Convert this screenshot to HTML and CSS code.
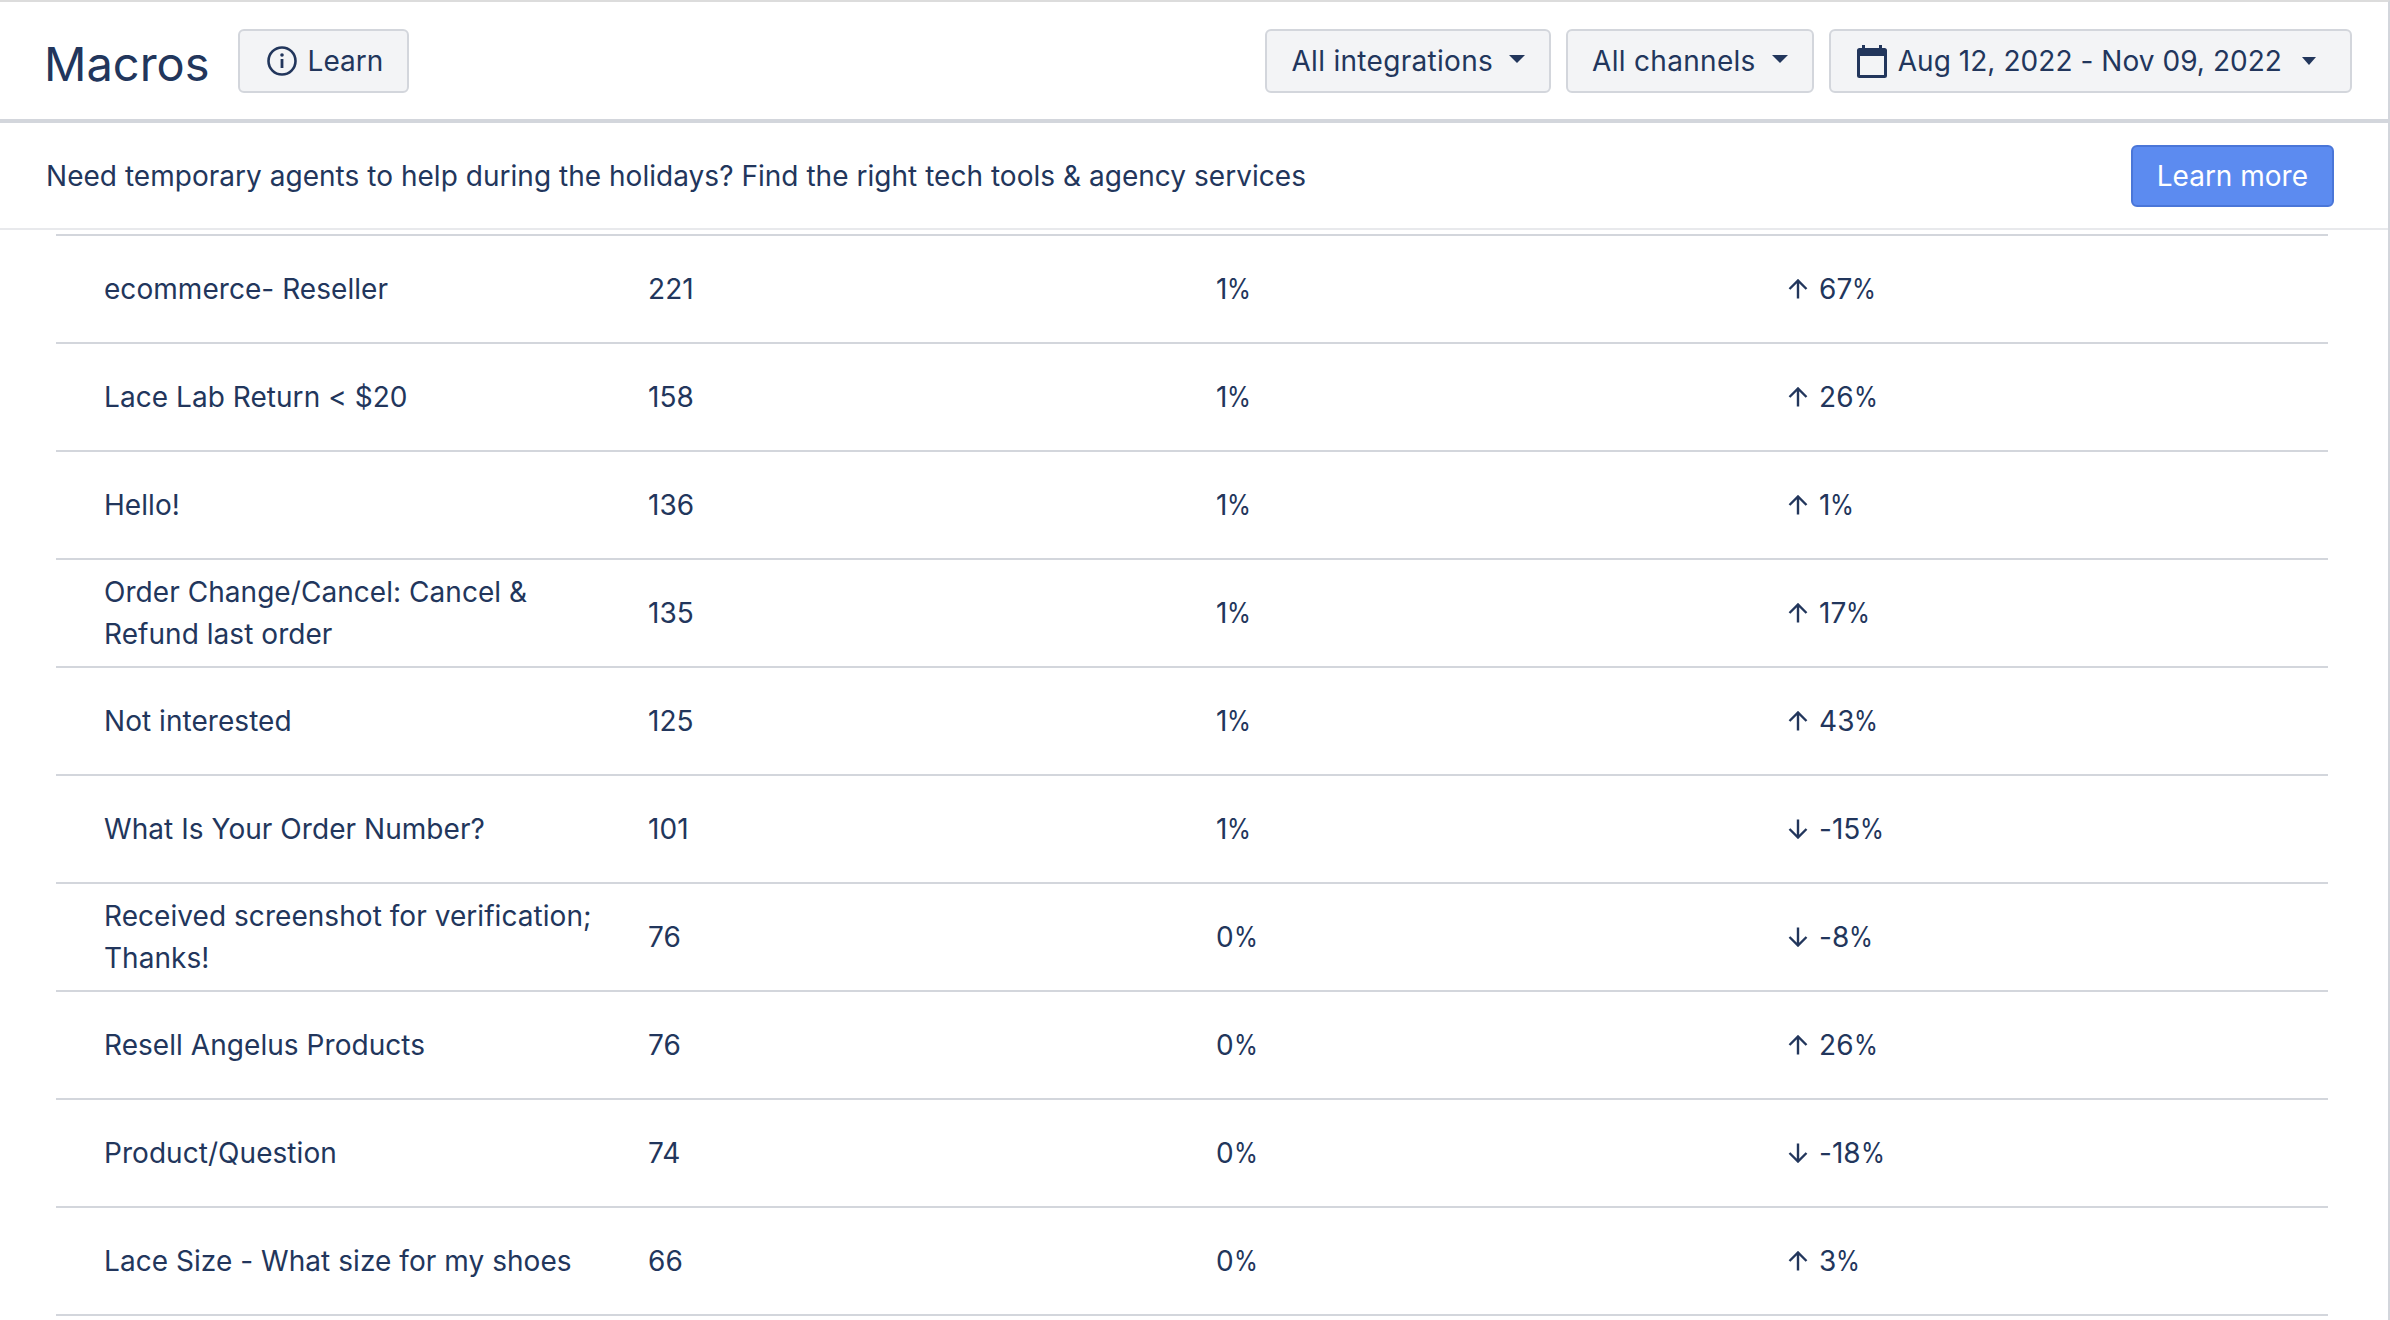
FILE: index.html
```html
<!DOCTYPE html>
<html lang="en">
<head>
<meta charset="utf-8">
<title>Macros</title>
<link rel="stylesheet" href="styles.css">
</head>
<body>
<svg class="sprite" aria-hidden="true">
  <symbol id="up" viewBox="0 0 20 20"><path d="M10 19.500V1.500M1.500 10 10 1.500l8.500 8.500" fill="none" stroke="currentColor" stroke-width="2.400"/></symbol>
  <symbol id="down" viewBox="0 0 20 20"><path d="M10 .5v18M1.500 10l8.500 8.500 8.500-8.500" fill="none" stroke="currentColor" stroke-width="2.400"/></symbol>
</svg>
<div class="page">
  <header class="topbar">
    <div class="title-group">
      <h1 class="title">Macros</h1>
      <button class="btn learn">
        <svg class="icon-info" viewBox="0 0 30 30" width="30" height="30"><circle cx="15" cy="15" r="13.500" fill="none" stroke="currentColor" stroke-width="2.600"/><rect x="13.600" y="13" width="2.800" height="9" fill="currentColor"/><circle cx="15" cy="9" r="1.800" fill="currentColor"/></svg>
        Learn
      </button>
    </div>
    <div class="filters">
      <button class="btn">All integrations<span class="caret"></span></button>
      <button class="btn">All channels<span class="caret"></span></button>
      <button class="btn date">
        <svg class="icon-cal" viewBox="0 0 30 33" width="30" height="33"><path d="M5 0h3v3h14V0h3v3h2.500A2.500 2.500 0 0 1 30 5.500v25a2.500 2.500 0 0 1-2.500 2.500h-25A2.500 2.500 0 0 1 0 30.500v-25A2.500 2.500 0 0 1 2.500 3H5zM3 11v19h24V11z" fill="currentColor"/></svg>
        Aug 12, 2022 - Nov 09, 2022<span class="caret small"></span>
      </button>
    </div>
  </header>
  <section class="banner">
    <p class="banner-text">Need temporary agents to help during the holidays? Find the right tech tools &amp; agency services</p>
    <button class="btn-primary">Learn more</button>
  </section>
  <main class="content">
    <table class="macros">
      <colgroup><col class="c1"><col class="c2"><col class="c3"><col></colgroup>
      <tbody>
        <tr><td>ecommerce- Reseller</td><td>221</td><td>1<span class="pct">%</span></td><td><span class="trend"><svg class="arrow"><use href="#up"/></svg><span>67<span class="pct">%</span></span></span></td></tr>
        <tr><td>Lace Lab Return &lt; $20</td><td>158</td><td>1<span class="pct">%</span></td><td><span class="trend"><svg class="arrow"><use href="#up"/></svg><span>26<span class="pct">%</span></span></span></td></tr>
        <tr><td>Hello!</td><td>136</td><td>1<span class="pct">%</span></td><td><span class="trend"><svg class="arrow"><use href="#up"/></svg><span>1<span class="pct">%</span></span></span></td></tr>
        <tr><td>Order Change/Cancel: Cancel &amp; Refund last order</td><td>135</td><td>1<span class="pct">%</span></td><td><span class="trend"><svg class="arrow"><use href="#up"/></svg><span>17<span class="pct">%</span></span></span></td></tr>
        <tr><td>Not interested</td><td>125</td><td>1<span class="pct">%</span></td><td><span class="trend"><svg class="arrow"><use href="#up"/></svg><span>43<span class="pct">%</span></span></span></td></tr>
        <tr><td>What Is Your Order Number?</td><td>101</td><td>1<span class="pct">%</span></td><td><span class="trend"><svg class="arrow"><use href="#down"/></svg><span>-15<span class="pct">%</span></span></span></td></tr>
        <tr><td>Received screenshot for verification; Thanks!</td><td>76</td><td>0<span class="pct">%</span></td><td><span class="trend"><svg class="arrow"><use href="#down"/></svg><span>-8<span class="pct">%</span></span></span></td></tr>
        <tr><td>Resell Angelus Products</td><td>76</td><td>0<span class="pct">%</span></td><td><span class="trend"><svg class="arrow"><use href="#up"/></svg><span>26<span class="pct">%</span></span></span></td></tr>
        <tr><td>Product/Question</td><td>74</td><td>0<span class="pct">%</span></td><td><span class="trend"><svg class="arrow"><use href="#down"/></svg><span>-18<span class="pct">%</span></span></span></td></tr>
        <tr><td>Lace Size - What size for my shoes</td><td>66</td><td>0<span class="pct">%</span></td><td><span class="trend"><svg class="arrow"><use href="#up"/></svg><span>3<span class="pct">%</span></span></span></td></tr>
      </tbody>
    </table>
  </main>
</div>
</body>
</html>
```
FILE: styles.css
```css
* { box-sizing: border-box; }
html, body { margin: 0; height: 100%; overflow: hidden; background: #fff; }
body { font-family: Inter, "Noto Sans", sans-serif; color: #22365c; font-size: 28px; letter-spacing: .05px; }
.sprite { display: none; }
.page { height: 1320px; overflow: hidden; border-top: 2px solid #dcdcdc; border-right: 2px solid #d3d6dc; }
.topbar { height: 121px; display: flex; align-items: flex-start; justify-content: space-between; padding: 27px 36px 0 44px; border-bottom: 4px solid #d3d6dc; }
.title-group { display: flex; align-items: flex-start; gap: 28px; }
.title { margin: 3px 0 0; font-size: 47px; font-weight: 400; line-height: 64px; letter-spacing: 0; }
.filters { display: flex; gap: 15px; }
.btn { height: 64px; display: flex; align-items: center; padding: 0 24px; font: inherit; letter-spacing: .3px; color: inherit; background: #f3f4f6; border: 2px solid #d3d6dc; border-radius: 6px; }
.learn { gap: 11px; padding: 0 24px 0 27px; letter-spacing: 0; }
.date { gap: 11px; padding: 0 34px 0 26px; letter-spacing: .05px; }
.caret { display: inline-block; width: 0; height: 0; margin-left: 16px; margin-top: -4px; border-left: 8px solid transparent; border-right: 8px solid transparent; border-top: 8px solid currentColor; }
.caret.small { margin-left: 9px; margin-top: 0; border-left-width: 7px; border-right-width: 7px; }
.banner { height: 107px; display: flex; align-items: center; justify-content: space-between; padding: 0 54px 0 46px; border-bottom: 2px solid #e8e9ec; }
.banner-text { margin: 0; letter-spacing: .03px; }
.btn-primary { height: 62px; padding: 0 24px; font: inherit; letter-spacing: 0; color: #fff; background: #5c8bf0; border: 2px solid #4a76d8; border-radius: 6px; }
.content { padding: 4px 60px 0 56px; }
.macros { width: 100%; table-layout: fixed; border-collapse: collapse; border-top: 2px solid #d3d6dc; }
.c1 { width: 544px; }
.c2, .c3 { width: 568px; }
.macros td { height: 108px; padding: 0 0 0 48px; line-height: 42px; border-bottom: 2px solid #d3d6dc; }
.trend { display: inline-flex; align-items: center; gap: 11px; margin-left: 4px; }
.arrow { flex: none; width: 20px; height: 20px; }
.pct { display: inline-block; margin-right: -3px; transform: scaleX(.87); transform-origin: left center; }
```
